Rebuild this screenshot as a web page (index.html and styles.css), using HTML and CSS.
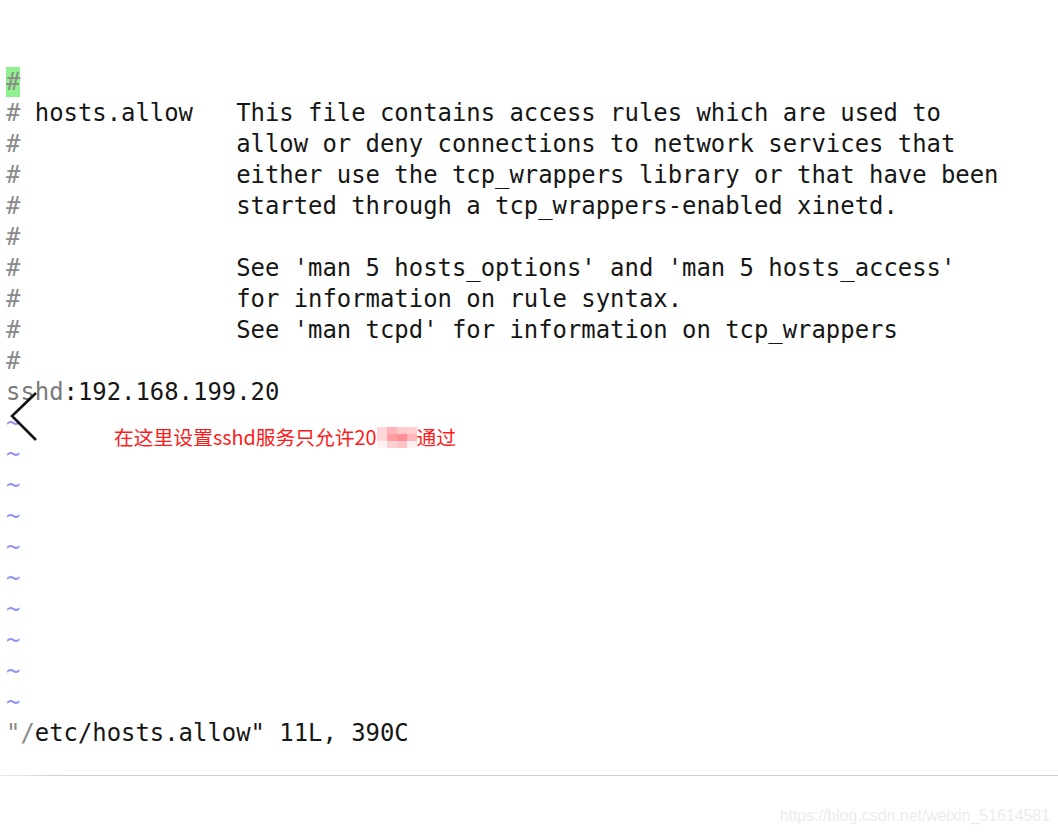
FILE: index.html
```html
<!DOCTYPE html>
<html lang="zh">
<head>
<meta charset="utf-8">
<title>hosts.allow</title>
<link rel="stylesheet" href="styles.css">
</head>
<body>
<div class="page">
  <div class="editor">
    <div class="line"><span class="cursor c">#</span></div>
    <div class="line"><span class="c">#</span> hosts.allow   This file contains access rules which are used to</div>
    <div class="line"><span class="c">#</span>               allow or deny connections to network services that</div>
    <div class="line"><span class="c">#</span>               either use the tcp_wrappers library or that have been</div>
    <div class="line"><span class="c">#</span>               started through a tcp_wrappers-enabled xinetd.</div>
    <div class="line"><span class="c">#</span></div>
    <div class="line"><span class="c">#</span>               See 'man 5 hosts_options' and 'man 5 hosts_access'</div>
    <div class="line"><span class="c">#</span>               for information on rule syntax.</div>
    <div class="line"><span class="c">#</span>               See 'man tcpd' for information on tcp_wrappers</div>
    <div class="line"><span class="c">#</span></div>
    <div class="line"><span class="s">sshd</span>:192.168.199.20</div>
    <div class="line t">~</div>
    <div class="line t">~</div>
    <div class="line t">~</div>
    <div class="line t">~</div>
    <div class="line t">~</div>
    <div class="line t">~</div>
    <div class="line t">~</div>
    <div class="line t">~</div>
    <div class="line t">~</div>
    <div class="line t">~</div>
    <div class="line status"><span class="c">"/</span>etc/hosts.allow" 11L, 390C</div>

    <svg class="chevron" width="30" height="52" viewBox="0 0 30 52">
      <polyline points="26,2 2,25 26,49" fill="none" stroke="#111" stroke-width="2.6"/>
    </svg>
    <div class="note">在这里设置sshd服务只允许20<span class="mosaic"><i></i><i></i><i></i><i></i><i></i><i></i><i></i><i></i><i></i><i></i><i></i><i></i></span>通过</div>
  </div>
  <div class="rule"></div>
  <div class="footer">https://blog.csdn.net/weixin_51614581</div>
</div>
</body>
</html>
```
FILE: styles.css
```css
html, body {
  margin: 0;
  padding: 0;
  background: #fff;
}
.page {
  width: 1058px;
  height: 836px;
  overflow: hidden;
}
.editor {
  position: relative;
  padding: 67px 0 0 6px;
  height: 681px;
  font-family: "DejaVu Sans Mono", "Liberation Mono", monospace;
  font-size: 23.9px;
  color: #161616;
}
.line {
  height: 31px;
  line-height: 31px;
  white-space: pre;
}
.c {
  color: #8a8a8a;
}
.s {
  color: #7a7a7a;
}
.cursor {
  display: inline-block;
  background: #8ff08f;
  line-height: 30px;
}
.t {
  color: #9090f8;
}
.chevron {
  position: absolute;
  left: 10px;
  top: 391px;
}
.note {
  position: absolute;
  left: 114px;
  top: 424px;
  font-family: "Noto Sans CJK SC", "Microsoft YaHei", sans-serif;
  font-size: 19.8px;
  line-height: 26px;
  color: #ff1a1a;
  display: flex;
  align-items: center;
  white-space: nowrap;
}
.mosaic {
  display: grid;
  grid-template-columns: repeat(4, 10px);
  grid-template-rows: repeat(3, 7px);
  width: 40px;
  margin: 0;
}
.mosaic i {
  display: block;
  background: #ffb0b3;
}
.mosaic i:nth-child(1) { background: #ffd6d8; }
.mosaic i:nth-child(2) { background: #ffb3b6; }
.mosaic i:nth-child(3) { background: #ffc8ca; }
.mosaic i:nth-child(4) { background: #ffcfd1; }
.mosaic i:nth-child(5) { background: #ffd8da; }
.mosaic i:nth-child(6) { background: #ff9ea2; }
.mosaic i:nth-child(7) { background: #ff8f94; }
.mosaic i:nth-child(8) { background: #ffb6b9; }
.mosaic i:nth-child(9) { background: #fff2f2; }
.mosaic i:nth-child(10) { background: #ffd0d2; }
.mosaic i:nth-child(11) { background: #ffc4c6; }
.mosaic i:nth-child(12) { background: #fff0f0; }
.rule {
  margin-top: 27px;
  height: 1px;
  background: linear-gradient(to right, #ececec, #cfcfcf 6%, #cfcfcf);
}
.footer {
  text-align: right;
  padding: 31px 8px 0 0;
  font-family: "Liberation Sans", Arial, sans-serif;
  font-size: 15.9px;
  color: #ececec;
}
```
